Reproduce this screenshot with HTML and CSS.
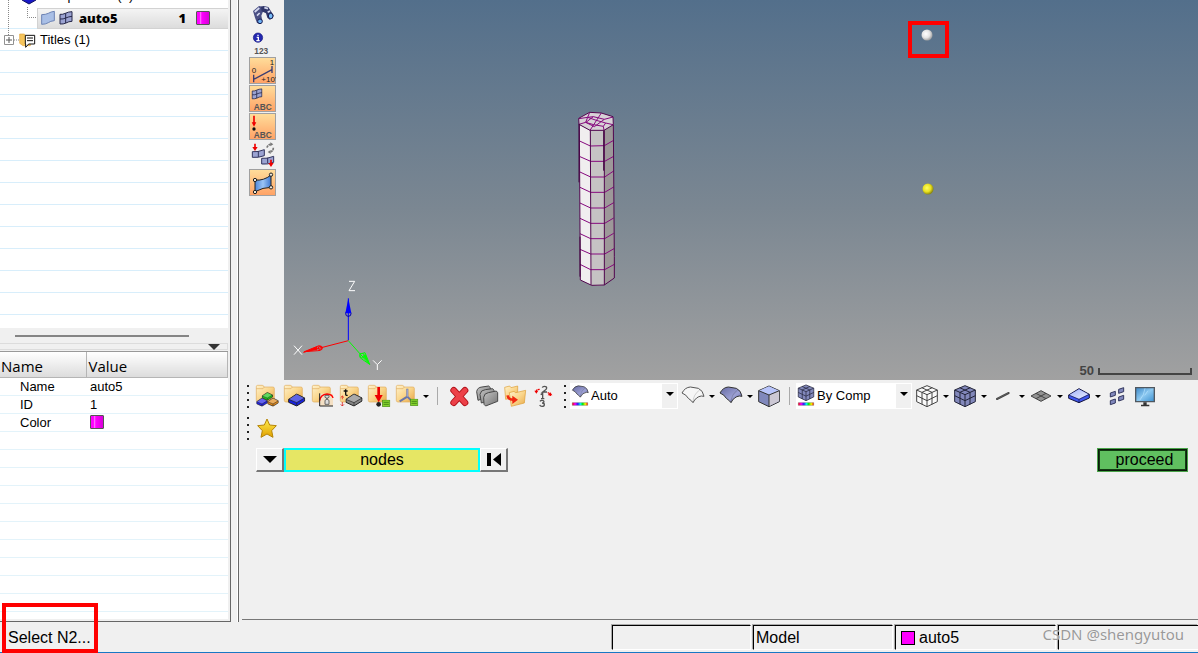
FILE: index.html
```html
<!DOCTYPE html>
<html lang="en">
<head>
<meta charset="utf-8">
<title>Model</title>
<link rel="stylesheet" href="styles.css">
</head>
<body>
<svg class="defs" aria-hidden="true">
  <defs>
    <linearGradient id="gFolder" x1="0" y1="0" x2="1" y2="1"><stop offset="0" stop-color="#fff2cc"/><stop offset=".5" stop-color="#fad68c"/><stop offset="1" stop-color="#e8a848"/></linearGradient>
    <linearGradient id="gSurf" x1="0" y1="0" x2="1" y2="1"><stop offset="0" stop-color="#6468a0"/><stop offset=".6" stop-color="#9ca0d4"/><stop offset="1" stop-color="#5a5e98"/></linearGradient>
    <linearGradient id="gLight" x1="0" y1="0" x2="1" y2="1"><stop offset="0" stop-color="#a4b4f8"/><stop offset="1" stop-color="#e8ecff"/></linearGradient>
    <linearGradient id="gBlue"><stop offset="0" stop-color="#4f86d8"/><stop offset=".5" stop-color="#9ac4f6"/><stop offset="1" stop-color="#3f78d0"/></linearGradient>
    <linearGradient id="gRain"><stop offset="0" stop-color="#f00"/><stop offset=".18" stop-color="#f0f"/><stop offset=".36" stop-color="#22f"/><stop offset=".52" stop-color="#0ff"/><stop offset=".68" stop-color="#0e0"/><stop offset=".84" stop-color="#ff0"/><stop offset="1" stop-color="#f20"/></linearGradient>
    <linearGradient id="gStar" x1="0" y1="0" x2="0" y2="1"><stop offset="0" stop-color="#ffee50"/><stop offset="1" stop-color="#e0a000"/></linearGradient>
    <linearGradient id="gGray" x1="0" y1="0" x2="1" y2="1"><stop offset="0" stop-color="#c4c4c4"/><stop offset="1" stop-color="#747474"/></linearGradient>
    <linearGradient id="gScreen" x1="0" y1="0" x2="1" y2="1"><stop offset="0" stop-color="#3c88c8"/><stop offset=".5" stop-color="#8cc8f0"/><stop offset="1" stop-color="#3c90d0"/></linearGradient>
    <radialGradient id="gWhite" cx=".4" cy=".4" r=".6"><stop offset="0" stop-color="#fff"/><stop offset=".6" stop-color="#e4e4e4"/><stop offset="1" stop-color="#a4a4a4"/></radialGradient>
    <radialGradient id="gYellow" cx=".4" cy=".4" r=".6"><stop offset="0" stop-color="#ffff60"/><stop offset=".6" stop-color="#e8e020"/><stop offset="1" stop-color="#8c8810"/></radialGradient>
    <symbol id="folder" viewBox="0 0 72 72"><path d="M4 8q0-4 4-4h14q4 0 5 5h26q5 0 5 4v36q0 5-5 5H9q-5 0-5-5z" fill="url(#gFolder)" stroke="#e0ac5c" stroke-width="2"/><path d="M4 14h20l4-5" fill="none" stroke="#e0ac60" stroke-width="2"/></symbol>
    <symbol id="slab" viewBox="0 0 50 40"><path d="M1 18 25 2l24 12v9L25 38 1 27z" fill="currentColor" stroke="#222" stroke-width="3"/><path d="M2 18 25 3l22 11-22 14z" fill="#fff" opacity=".3"/><path d="M1 18l24 10 24-14M25 28v9" fill="none" stroke="#222" stroke-width="2"/></symbol>
    <symbol id="list" viewBox="0 0 24 22"><path d="M1 1h22v20H1z" fill="#86d32c" stroke="#3d8210" stroke-width="2"/><path d="M4 8h16M4 14h16" stroke="#28680c" stroke-width="2"/></symbol>
    <symbol id="surface" viewBox="0 0 72 72"><path d="M3 27Q12 10 28 9l24 4q14 6 17 24l-8-1q-16 2-25 20l-4-5-10-8Q16 32 3 27z" stroke-width="3" stroke-linejoin="round"/><path d="M36 56Q36 32 56 18" fill="none" stroke-width="2" opacity=".35"/></symbol>
    <symbol id="gridcube" viewBox="0 0 72 72"><path d="M36 5 67 18v35L36 68 5 53V18z" stroke-width="3"/><path d="M5 18l31 14 31-14M36 32v36M20 11l31 14v36M52 11 21 25v36M5 35l31 15 31-15" fill="none" stroke-width="3"/></symbol>
    <symbol id="meshflag" viewBox="0 0 42 42"><path d="M3 10q8 1 16-3 10-5 20-5v29q-10 0-18 5-8 4-18 3z" fill="#9ba3d2" stroke="#26284a" stroke-width="3"/><path d="M20 7v29M3 24q10 1 17-3 9-4 19-5" fill="none" stroke="#26284a" stroke-width="3"/></symbol>
  </defs>
</svg>

<div class="workspace">
  <aside class="sidebar">
    <div class="tree" role="tree">
      <div class="tree-row tree-row-top" role="treeitem"><svg class="tree-icon" viewBox="0 0 18 18"><path d="M2 8l7-4 7 4v5l-7 4-7-4z" fill="#1818c8" stroke="#101060"/></svg><span>Components (1)</span></div>
      <div class="tree-row tree-child" role="treeitem" aria-selected="true">
        <div class="selected">
          <svg width="14" height="16" viewBox="0 0 42 48"><path d="M2 14q12 0 20-4 8-5 18-6v28q-12 1-18 6-8 5-20 5z" fill="#a9bfe6" stroke="#6d83b4" stroke-width="3"/></svg>
          <svg width="14" height="14"><use href="#meshflag"/></svg>
          <b>auto5</b><b class="count">1</b><span class="swatch"></span>
        </div>
      </div>
      <div class="tree-row" role="treeitem">
        <svg class="plus" viewBox="0 0 18 10"><path d="M.5.5h9v9h-9z" fill="#fff" stroke="#919191"/><path d="M2 5h6M5 2v6" stroke="#555"/><path d="M10 5h8" stroke="#888" stroke-dasharray="1 1"/></svg>
        <svg class="titles-icon" viewBox="0 0 51 48"><path d="M2 6h14l4 5h14v30H12L2 34z" fill="#f5c45c" stroke="#e2a840" stroke-width="2"/><path d="M19 10h28v26H29l-9 10v-10h-1z" fill="#fff" stroke="#111" stroke-width="3"/><path d="M24 18h18M24 26h18" stroke="#111" stroke-width="3"/></svg>
        <span>Titles (1)</span>
      </div>
      <svg class="branches" viewBox="0 0 40 50"><path d="M8.500 0v35M27.500 7v10.500h9" fill="none" stroke="#888" stroke-dasharray="1 1"/></svg>
    </div>
    <div class="hscroll"><span></span></div>
    <div class="collapse"><svg width="12" height="6"><path d="M0 0h12L6 6z" fill="#333"/></svg></div>
    <div class="props">
      <table>
        <thead><tr><th>Name</th><th>Value</th></tr></thead>
        <tbody>
          <tr><td>Name</td><td>auto5</td></tr>
          <tr><td>ID</td><td>1</td></tr>
          <tr><td>Color</td><td><span class="swatch"></span></td></tr>
        </tbody>
      </table>
    </div>
  </aside>

  <main class="main">
    <div class="view">
      <div class="tools">
        <button aria-label="Find"><svg viewBox="0 0 81 81"><path d="M12 30l10-8 8-7 12 2 3 7-8 20 3 15-7 9-9-2-6-16z" fill="#4a4f84"/><path d="M36 17l8-2 14 3 7 11 9 14-3 9-9 4-7-6-4-13-13-6z" fill="#30366a"/><ellipse cx="33" cy="61" rx="7" ry="7" fill="#6cb0f4" stroke="#171c50" stroke-width="3"/><ellipse cx="65" cy="45" rx="7" ry="8" fill="#78bcf8" stroke="#171c50" stroke-width="3"/><path d="M17 33l14-12M46 20l11 3M24 44l8-8M56 34l7-4" stroke="#d4d8ef" stroke-width="5"/></svg></button>
        <button aria-label="Numbers"><svg viewBox="0 0 81 81"><circle cx="27" cy="26" r="14" fill="#2428b0" stroke="#181c80" stroke-width="2"/><path d="M27 17v4M23 25h5v9M22 35h10" fill="none" stroke="#fff" stroke-width="4"/><text x="16" y="74" class="label-sm">123</text></svg></button>
        <button class="on" aria-label="Load scale"><svg viewBox="0 0 81 81"><path d="M14 53v23M69 27v21M14 67 69 38" stroke="#3a3d72" stroke-width="4"/><text x="8" y="48" class="digits">0</text><text x="62" y="24" class="digits">1</text><text x="37" y="74" class="digits">+10'</text></svg></button>
        <button class="on" aria-label="Element labels"><svg viewBox="0 0 81 81"><use href="#meshflag" x="7" y="10" width="34" height="34"/><text x="14" y="74" class="label-sm">ABC</text></svg></button>
        <button class="on" aria-label="Load labels"><svg viewBox="0 0 81 81"><path d="M15 8v26" stroke="#e00" stroke-width="5"/><path d="M8 28h14l-7 13z" fill="#e00"/><circle cx="15" cy="48" r="5" fill="#111"/><text x="14" y="74" class="label-sm">ABC</text></svg></button>
        <button aria-label="Exchange"><svg viewBox="0 0 81 81"><path d="M10 32q16 2 36-6v18q-18 7-36 5zM38 52q16 2 36-6v18q-18 7-36 5z" fill="#9ba3d2" stroke="#33355e" stroke-width="3"/><path d="M28 31v17M56 50v17" stroke="#33355e" stroke-width="3"/><path d="M18 8v13M66 56v13" stroke="#e00" stroke-width="5"/><path d="M10 18h16l-8 12zM58 66h16l-8 12z" fill="#e00"/><path d="M54 20q2-9 12-10M73 20q0 11-10 13" fill="none" stroke="#777" stroke-width="5" stroke-dasharray="7 2"/><path d="M64 4l9 6-9 6zM65 27l-9 6 9 6z" fill="#777"/></svg></button>
        <button class="on" aria-label="Shell elements"><svg viewBox="0 0 81 81"><path d="M18 33q26 3 48-15v37q-24 0-48 13z" fill="url(#gBlue)" stroke="#222" stroke-width="3"/><g fill="#f0e8d8" stroke="#222" stroke-width="3"><circle cx="18" cy="33" r="5"/><circle cx="66" cy="17" r="5"/><circle cx="66" cy="55" r="5"/><circle cx="18" cy="69" r="5"/></g></svg></button>
      </div>
      <div class="canvas">
        <svg class="mesh" viewBox="0 0 240 600">
          <path d="M58 74 90 91 95 556 61 540z" fill="#f0eeef"/><path d="M91 91h42v464l-20 2-20-2z" fill="#c6c3c4"/><path d="M132 91 160 75l3 459-30 21z" fill="#9d9899"/>
          <path d="M56 55 89 37l35 2 35 11 1 24-28 17H90L57 73z" fill="#d8d2d7"/>
          <path d="M59 123l32 15 42-1 28-16M60 170l32 14h42l27-15M60 216l32 15h42l27-18M60 262l32 15h42l27-16M60 309l32 15h42l27-16M60 355l32 15h42l27-16M60 401l32 15h42l27-16M60 448l32 14h42l28-16M60 493l32 16h42l29-16M124 39 90 91M89 37l-6 15-26 4M83 52l26 9 28 8 22 5M83 52 100 50 133 58l26-7M57 73l20-6 24 7 29 5 2 12M77 67l6-15M100 50l-22 17M133 58l-30 22-26-13M137 69l-7 10" fill="none" stroke="#86087e" stroke-width="3"/>
          <path d="M56 55 89 37l35 2 35 11 1 24-28 17H90L57 73zM58 72 61 540 95 556 133 555 163 534V470L160 75M91 91 93 555M133 91V555" fill="none" stroke="#52064f" stroke-width="3"/>
          <path d="M57 72v175M60 410v120M131 92v120" stroke="#40003f" stroke-width="3"/>
        </svg>
        <svg class="triad" viewBox="12 0 348 330">
          <g fill="none" stroke-width="3"><path d="M205 211V85" stroke="#00f"/><path d="M205 212 70 247M73 245l44-18q9 2 7 10-2 6-11 5z" stroke="#f00"/><path d="M205 212l64 72M240 252l15-4 14 35-28-19z" stroke="#0f0"/><circle cx="246" cy="257" r="7" stroke="#0f0"/><circle cx="121" cy="234" r="6" stroke="#f00"/><circle cx="205" cy="131" r="8" stroke="#00a"/></g>
          <path d="M205 85l-9 45h18z" fill="#00f"/><path d="M70 247l42-18v10z" fill="#f00"/><path d="M269 284l-21-27 9-4z" fill="#0f0"/>
          <path d="M207 34h17l-17 28h18M42 227l24 27M66 227l-24 27M279 271l13 13 13-13M292 284v16" fill="none" stroke="#fff" stroke-width="3"/>
        </svg>
        <svg class="node node-white" viewBox="0 0 12 12"><circle cx="6" cy="6" r="5.500" fill="url(#gWhite)"/></svg>
        <svg class="node node-yellow" viewBox="0 0 12 12"><circle cx="6" cy="6" r="5.500" fill="url(#gYellow)"/></svg>
        <div class="mark mark-node"></div>
        <div class="scale"><span>50</span><i></i></div>
      </div>
    </div>

    <div class="toolbar">
      <span class="grip"></span>
      <button aria-label="Component collector"><svg viewBox="0 0 72 72"><use href="#folder"/><use href="#slab" x="20" y="24" width="34" height="26" color="#18c818"/><use href="#slab" x="4" y="41" width="34" height="27" color="#2020e8"/><use href="#slab" x="37" y="41" width="34" height="27" color="#e08818"/></svg></button>
      <button aria-label="Material collector"><svg viewBox="0 0 72 72"><use href="#folder"/><use href="#slab" x="15" y="28" width="52" height="40" color="#1822dc"/></svg></button>
      <button aria-label="Curve collector"><svg viewBox="0 0 72 72"><use href="#folder"/><path d="M26 29v37h40V29z" fill="#f4e0c4"/><path d="M26 50q2-18 22-20 16 1 18 12" fill="none" stroke="#f00" stroke-width="4"/><path d="M26 28v38h40" fill="none" stroke="#222" stroke-width="3"/><path d="M42 34h12v6l-8 4 8 5v12H42V49l8-5-8-4z" fill="#ddd" stroke="#666" stroke-width="3"/></svg></button>
      <button aria-label="Property collector"><svg viewBox="0 0 72 72"><use href="#folder"/><use href="#slab" x="19" y="28" width="52" height="40" color="#858585"/><path d="M20 16v15q0 4 6 3M14 21h12" fill="none" stroke="#111" stroke-width="4"/><path d="M10 36v10M10 54v12M5 41l5-5 5 5M5 61l5 5 5-5" fill="none" stroke="#d00" stroke-width="2"/></svg></button>
      <button aria-label="Load collector"><svg viewBox="0 0 72 72"><use href="#folder"/><path d="M35 9v30" stroke="#e00" stroke-width="8"/><path d="M23 33h24L35 55z" fill="#e00"/><circle cx="35" cy="61" r="7" fill="#222"/><use href="#list" x="45" y="47" width="25" height="22"/></svg></button>
      <button aria-label="System collector"><svg viewBox="0 0 72 72"><use href="#folder"/><path d="M37 14v24L14 52M37 38l16 16" fill="none" stroke="#6a76a8" stroke-width="6"/><path d="M37 16v22" stroke="#c0c8e8" stroke-width="2"/><use href="#list" x="45" y="44" width="25" height="22"/></svg></button>
      <button class="drop" aria-label="More collectors"></button>
      <span class="sep"></span>
      <button aria-label="Delete"><svg viewBox="0 0 72 72"><path d="M20 19 54 56M54 19 20 56" stroke="#b01018" stroke-width="20" stroke-linecap="round"/><path d="M20 19 54 56M54 19 20 56" stroke="#ec4048" stroke-width="15" stroke-linecap="round"/></svg></button>
      <button aria-label="Card edit"><svg viewBox="0 0 72 72"><g fill="url(#gGray)" stroke="#484848" stroke-width="3" stroke-linejoin="round"><path d="M5 23q2-13 16-14l20-3 5 5v24L9 49z"/><path d="M15 31q2-13 16-14l22-3 4 5v26L19 57z"/><path d="M26 40q2-13 14-14l24-5 4 5v26l-8 3-28 11-5-5z"/></g></svg></button>
      <button aria-label="Organize"><svg viewBox="0 0 72 72"><g fill="url(#gFolder)" stroke="#dc9c30" stroke-width="2"><path d="M5 10l15-4 4 5 20-5v32L8 46z"/><path d="M19 26l14-4 5 4 30-7-4 38-39 10z"/></g><path d="M14 34q2 13 16 13" fill="none" stroke="#f02810" stroke-width="8"/><path d="M28 35l17 12-17 13z" fill="#f02810"/></svg></button>
      <button aria-label="Renumber"><svg viewBox="0 0 72 72"><path d="M34 11q1-4 6-4 7 0 7 5 0 3-4 6l-8 6h13M29 32l6-4v16M30 44h10M27 52q2-3 6-3 6 0 6 4t-6 4q7 0 7 5t-7 5q-5 0-7-4" fill="none" stroke="#555" stroke-width="4"/><path d="M26 16q-10 0-10 6M50 26q8 2 8 10" fill="none" stroke="#e00" stroke-width="4" stroke-dasharray="6 2"/><path d="M10 20h12l-6 9zM50 34h14l-6-9z" fill="#e00"/></svg></button>
      <span class="grip grip-mid"></span>
      <label class="combo combo-auto"><svg viewBox="0 0 72 78"><use href="#surface" x="0" y="2" width="56" height="52" fill="url(#gSurf)" stroke="#333"/><path d="M4 59h46v8H4z" fill="url(#gRain)" stroke="#444"/></svg><select aria-label="Color by"><option>Auto</option></select><span class="combo-arrow"></span></label>
      <button aria-label="Wireframe geometry"><svg viewBox="0 0 72 72"><use href="#surface" fill="#f6f6f6" stroke="#555"/></svg></button>
      <button class="drop" aria-label="Wireframe options"></button>
      <button aria-label="Shaded geometry"><svg viewBox="0 0 72 72"><use href="#surface" fill="url(#gSurf)" stroke="#333"/></svg></button>
      <button class="drop" aria-label="Shading options"></button>
      <button aria-label="Transparency"><svg viewBox="0 0 72 72"><path d="M36 6 67 20v33L36 68 5 53V20z" fill="#8088bc" stroke="#333" stroke-width="3"/><path d="M36 7 66 20 36 33 6 20z" fill="#b8c4fa"/><path d="M36 33 66 20v32L36 67z" fill="#ccc8d4"/><path d="M5 20l31 13 31-13M36 33v35" fill="none" stroke="#333" stroke-width="3"/></svg></button>
      <span class="sep"></span>
      <label class="combo combo-comp"><svg viewBox="0 0 72 78"><use href="#gridcube" x="0" y="2" width="54" height="54" fill="#8288bb" stroke="#282a40"/><path d="M4 59h46v8H4z" fill="url(#gRain)" stroke="#444"/></svg><select aria-label="Element color"><option>By Comp</option></select><span class="combo-arrow"></span></label>
      <button aria-label="Wireframe elements"><svg viewBox="0 0 72 72"><use href="#gridcube" fill="#fafafa" stroke="#444"/></svg></button>
      <button class="drop" aria-label="Wireframe element options"></button>
      <button aria-label="Shaded elements"><svg viewBox="0 0 72 72"><use href="#gridcube" fill="#8288bb" stroke="#222438"/></svg></button>
      <button class="drop" aria-label="Shaded element options"></button>
      <button aria-label="1D elements"><svg viewBox="0 0 72 72"><path d="M18 45 53 27" stroke="#444" stroke-width="6" stroke-linecap="round"/><path d="M19 44 52 27" stroke="#888" stroke-width="1"/></svg></button>
      <button class="drop" aria-label="1D options"></button>
      <button aria-label="2D elements"><svg viewBox="0 0 72 72"><path d="M6 36 36 20l30 16-30 16z" fill="#929292" stroke="#444" stroke-width="3"/><path d="M21 28l30 16M51 28 21 44" stroke="#444" stroke-width="3"/></svg></button>
      <button class="drop" aria-label="2D options"></button>
      <button aria-label="3D elements"><svg viewBox="0 0 72 72"><path d="M5 33 36 14l31 17v11L36 56 5 43z" fill="#4057f0" stroke="#15153c" stroke-width="3"/><path d="M7 33 36 16l28 15-28 14z" fill="url(#gLight)"/><path d="M5 33l31 13 31-15M36 46v10" fill="none" stroke="#15153c" stroke-width="2"/></svg></button>
      <button class="drop" aria-label="3D options"></button>
      <button aria-label="Shrink elements"><svg viewBox="0 0 72 72"><path d="M16 27l15-5v12l-15 5zM41 16l15-5v12l-15 5zM16 50l15-5v12l-15 5zM41 39l15-5v12l-15 5z" fill="#8188bd" stroke="#33375e" stroke-width="3"/></svg></button>
      <button aria-label="Display options"><svg viewBox="0 0 72 72"><path d="M8 11h56v42H8z" fill="url(#gScreen)" stroke="#505860" stroke-width="4"/><path d="M36 13q-2 20-16 36M45 20l-10 14" fill="none" stroke="#b8e4ff" stroke-width="2"/><path d="M31 55h10v7h8v5H24v-5h7z" fill="#333"/></svg></button>
    </div>

    <div class="toolbar toolbar-fav">
      <span class="grip"></span>
      <button aria-label="Favorites"><svg viewBox="0 0 72 72"><path d="M36 9l8 18 20 2-14 15 4 20-18-10-18 10 4-20L8 29l20-2z" fill="url(#gStar)" stroke="#b58508" stroke-width="3" stroke-linejoin="round"/></svg></button>
    </div>

    <div class="panel">
      <button class="raised" aria-label="Entity type"><svg width="14" height="7"><path d="M0 0h14L7 7z"/></svg></button>
      <button class="nodes">nodes</button>
      <button class="raised" aria-label="Reset"><svg width="14" height="13"><path d="M0 0h4v13H0zM14 0v13L6 6.500z"/></svg></button>
      <button class="proceed">proceed</button>
    </div>
  </main>
</div>

<footer class="status">
  <span class="message">Select N2...</span>
  <span class="cell cell-blank"></span>
  <span class="cell cell-model">Model</span>
  <span class="cell cell-comp"><i></i>auto5</span>
  <span class="cell cell-last"></span>
  <span class="watermark">CSDN @shengyutou</span>
  <div class="mark mark-status"></div>
</footer>
</body>
</html>
```
FILE: styles.css
```css
* { box-sizing: border-box; }
body {
  margin: 0;
  height: 100vh;
  display: flex;
  flex-direction: column;
  overflow: hidden;
  background: #f0f0f0;
  color: #000;
  font: 13px/18px "Liberation Sans", Arial, sans-serif;
}
button { padding: 0; border: 0; background: none; color: inherit; font: inherit; }
svg { display: block; flex: none; }
.defs { position: absolute; width: 0; height: 0; }
.workspace { flex: 1; display: flex; min-height: 0; }

/* Sidebar */
.sidebar {
  width: 231px;
  flex: none;
  display: flex;
  flex-direction: column;
  padding-right: 2px;
  border-right: 1px solid #666;
  border-bottom: 1px solid #666;
}
.tree {
  position: relative;
  flex: 1;
  overflow: hidden;
  background: #fff repeating-linear-gradient(#fff 0 21px, #d8eefb 21px 22px) 0 7px;
}
.tree-row { display: flex; align-items: center; height: 22px; }
.tree-row-top { margin-top: -15px; padding-left: 20px; gap: 2px; }
.tree-icon { width: 18px; height: 18px; }
.tree-child { padding-left: 37px; }
.selected {
  flex: 1;
  height: 21px;
  display: flex;
  align-items: center;
  gap: 4px;
  padding: 0 18px 0 3px;
  border: 1px solid #d2d2d2;
  border-right: 0;
  background: linear-gradient(#f4f4f4, #dcdcdc);
  font: bold 13px/18px "Noto Sans", sans-serif;
}
.selected b { margin-left: 2px; }
.selected .count { margin-left: auto; margin-right: 6px; }
.swatch {
  width: 14px;
  height: 14px;
  display: block;
  border: 1px solid #555;
  border-radius: 1px;
  background: linear-gradient(90deg, #f0f 0 20%, #ff70ff 30%, #f0f 40%, #d800d8);
}
.plus { width: 18px; height: 10px; margin-left: 4px; margin-right: -3px; }
.titles-icon { width: 17px; height: 16px; margin-right: 4px; }
.branches { position: absolute; left: 0; top: 0; width: 40px; height: 50px; }
.hscroll { height: 15px; padding: 7px 39px 0 15px; }
.hscroll span { display: block; height: 2px; background: #858585; }
.collapse {
  height: 7px;
  display: flex;
  justify-content: flex-end;
  margin: 0 0 1px;
  padding-right: 7px;
  border: 1px solid #dcdcdc;
  border-left: 0;
}
.props {
  height: 268px;
  margin-bottom: 2px;
  border-top: 1px solid #999;
  background: #fff repeating-linear-gradient(#fff 0 17px, #e3f3fa 17px 18px) 0 26px;
}
.props table { width: 100%; border-collapse: collapse; table-layout: fixed; }
.props th {
  height: 25px;
  padding: 4px 0 0 2px;
  border-right: 1px solid #b5b5b5;
  border-bottom: 1px solid #b5b5b5;
  background: linear-gradient(#fff, #dcdcdc);
  text-align: left;
  font: 15px/20px "Open Sans", sans-serif;
}
.props th:first-child { width: 86px; padding-left: 1px; }
.props td { height: 18px; padding: 0 0 0 4px; line-height: 17px; }
.props td:first-child { padding-left: 20px; }

/* Main area */
.main {
  flex: 1;
  min-width: 0;
  display: flex;
  flex-direction: column;
  margin-left: 6px;
  padding-bottom: 2px;
  border-left: 1px solid #fff;
  box-shadow: inset 1px 0 #666;
}
.view { flex: 1; display: flex; min-height: 0; }
.tools { width: 46px; flex: none; padding: 1px 0 0 11px; }
.tools button { display: block; width: 27px; height: 27px; margin-bottom: 1px; }
.tools svg { width: 27px; height: 27px; }
.tools .on { background: linear-gradient(#ffdf9c, #ffa064); box-shadow: inset 0 0 0 1px #a0a0a0; }
.label-sm { font: bold 25px "Liberation Sans", sans-serif; fill: #555; }
.digits { font: 24px "Liberation Sans", sans-serif; fill: #222; }
.canvas {
  position: relative;
  flex: 1;
  overflow: hidden;
  background: linear-gradient(#536f8b, #7b8792 55%, #a1a1a1);
}
.mesh { position: absolute; left: 276px; top: 100px; width: 80px; height: 200px; }
.triad { position: absolute; left: 0; bottom: 0; width: 116px; height: 110px; }
.node { position: absolute; width: 12px; height: 12px; }
.node-white { left: 637px; top: 29px; }
.node-yellow { left: 638px; top: 183px; }
.mark { position: absolute; border: 4px solid #f00; }
.mark-node { left: 624px; top: 21px; width: 41px; height: 37px; }
.scale {
  position: absolute;
  right: 6px;
  bottom: 0;
  display: flex;
  align-items: center;
  gap: 4px;
  color: #444;
  font-weight: bold;
}
.scale i { width: 94px; height: 7px; border: 2px solid #444; border-top: 0; }

/* Toolbars */
.toolbar { display: flex; align-items: center; height: 32px; padding-left: 9px; }
.toolbar button { width: 28px; height: 28px; flex: none; display: grid; place-items: center; }
.toolbar button svg { width: 24px; height: 24px; }
.toolbar .drop { width: 10px; }
.drop::after, .combo-arrow::after {
  content: "";
  border: solid transparent;
  border-width: 3px 3px 0;
  border-top-color: #000;
}
.grip {
  width: 2px;
  height: 23px;
  flex: none;
  margin-right: 4px;
  background: repeating-linear-gradient(#222 0 2px, transparent 2px 7px);
}
.grip-mid { margin-left: 7px; margin-right: 4px; }
.sep { width: 1px; height: 18px; flex: none; margin: 0 6px; background: #aaa; }
.drop + .sep { margin-right: 7px; }
.combo {
  display: flex;
  align-items: center;
  flex: none;
  height: 26px;
  border: 1px solid #fff;
  background: #fff;
}
.combo svg { width: 24px; height: 26px; }
.combo-auto { width: 108px; margin-right: 1px; }
.combo-comp { width: 116px; margin-right: 1px; }
.combo select {
  flex: 1;
  min-width: 0;
  padding: 0;
  margin-left: -4px;
  appearance: none;
  border: 0;
  background: none;
  font: inherit;
  color: #000;
}
.combo-arrow { width: 15px; height: 24px; display: grid; place-items: center; background: #f0f0f0; }
.combo-arrow::after { border-width: 4px 4px 0; margin-bottom: 4px; }

/* Command panel */
.panel {
  display: flex;
  align-items: flex-start;
  min-height: 176px;
  margin-left: 4px;
  padding: 4px 10px 0 14px;
  border-bottom: 1px solid #777;
  font-size: 16px;
}
.panel button { height: 24px; }
.panel .raised {
  width: 28px;
  display: grid;
  place-items: center;
  border: solid #fff;
  border-width: 1px 2px 2px 1px;
  border-right-color: #777;
  border-bottom-color: #777;
  background: #f0f0f0;
}
.panel .nodes { width: 196px; border: 2px solid #0ff; background: #e6e664; }
.panel .proceed {
  width: 91px;
  margin-left: auto;
  padding-left: 4px;
  border: 2px solid #0a1a0a;
  background: #60c060;
  outline: 1px solid #49a449;
  outline-offset: -1px;
  box-shadow: inset 0 0 0 1px #123c12;
}

/* Status bar */
.status {
  position: relative;
  height: 31px;
  flex: none;
  display: flex;
  gap: 2px;
  padding: 3px 0 2px;
  border-bottom: 1px solid #1878c4;
  font-size: 16px;
  line-height: 24px;
}
.message { flex: 1; padding-left: 8px; padding-top: 1px; }
.cell {
  display: flex;
  align-items: center;
  padding-left: 2px;
  border: 1px solid #000;
  border-right-color: #fff;
  border-bottom-color: #fff;
  box-shadow: -1px -1px #aaa;
}
.cell-blank { width: 139px; }
.cell-model { width: 140px; }
.cell-comp { width: 161px; padding-left: 5px; gap: 4px; }
.cell-comp i { width: 14px; height: 14px; border: 1px solid #000; background: #f0f; }
.cell-last { width: 140px; border-right: 0; }
.watermark {
  position: absolute;
  right: 14px;
  top: 0;
  color: #999;
  font: 15px/24px "Noto Sans", sans-serif;
  text-shadow: 0 0 1px #fff;
}
.mark-status { left: 2px; bottom: -1px; width: 96px; height: 50px; }
```
